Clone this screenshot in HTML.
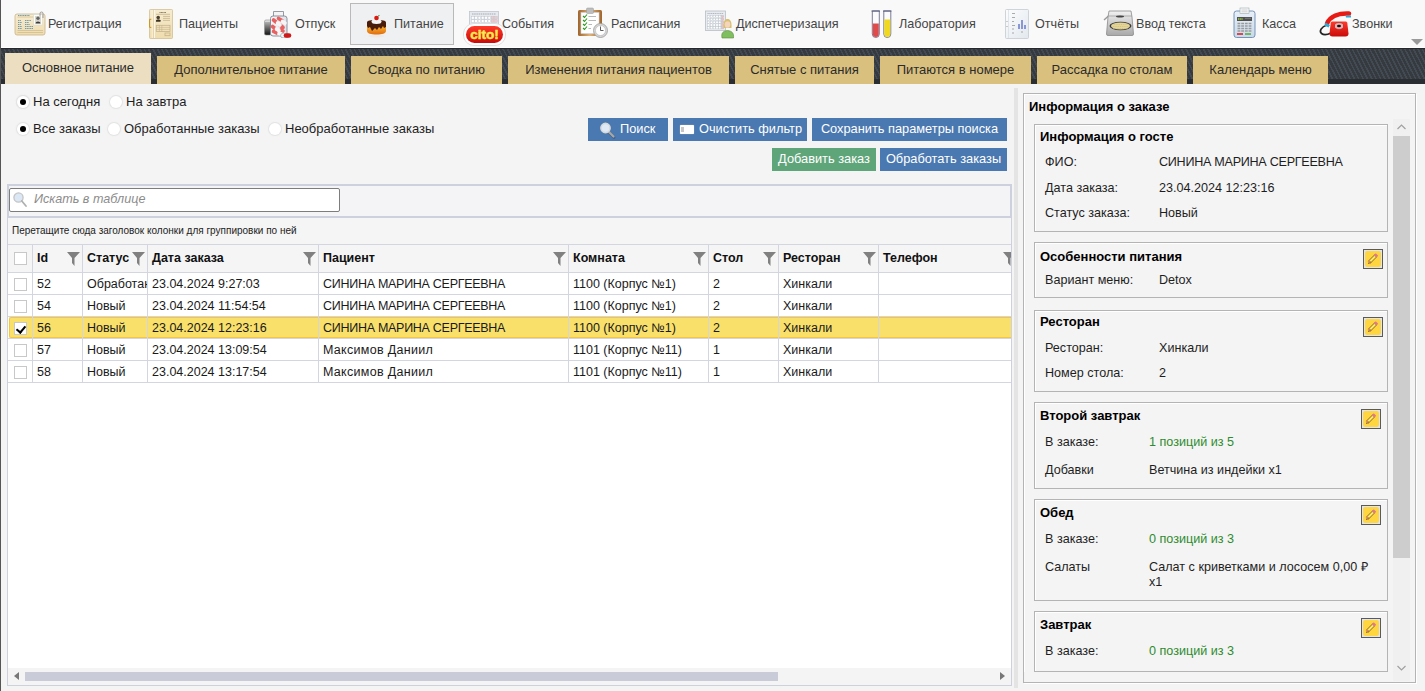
<!DOCTYPE html>
<html><head><meta charset="utf-8">
<style>
*{box-sizing:border-box;margin:0;padding:0}
html,body{width:1425px;height:691px;overflow:hidden}
body{position:relative;background:#f4f4f4;font-family:"Liberation Sans",sans-serif;font-size:13px;color:#222}
.a{position:absolute}
#lb{left:0;top:0;width:1px;height:691px;background:#555}
#tb{left:1px;top:0;width:1424px;height:48px;background:#f9f9f9;border-bottom:1px solid #fff}
.ti{position:absolute;top:0;height:47px;font-size:13px;color:#333;line-height:47px;white-space:nowrap}
.ti .tx{position:absolute;top:0}
#sel{left:350px;top:3px;width:104px;height:42px;background:#eff0f2;border:1px solid #b9b9b9}
#tabbar{left:1px;top:48px;width:1424px;height:36px;background:linear-gradient(#25292d,#25292d) top/100% 1px no-repeat,repeating-linear-gradient(63deg,#343a3f 0 2.3px,#434a51 2.3px 3.9px)}
#tabbar .bot{position:absolute;left:0;top:31px;width:100%;height:5px;background:#2a2e33}
.tt{position:absolute;top:17px;height:15px;line-height:15px;font-size:12.6px;color:#454545;white-space:nowrap}
.tab{position:absolute;top:8px;height:28px;background:#d9c07e;color:#2b2b2b;font-size:13px;text-align:center;line-height:28px;white-space:nowrap}
.tab.act{top:5px;height:31px;background:#ecdfc1;line-height:30px}

.rd{position:absolute;width:12px;height:12px;border-radius:50%;background:#fff;box-shadow:0 0 1px 1px #e2e2e2}
.rd.on::after{content:"";position:absolute;left:3px;top:3px;width:6px;height:6px;border-radius:50%;background:#000}
.lbl{position:absolute;height:15px;line-height:15px;font-size:13px;color:#1e1e1e;white-space:nowrap}
.btn{position:absolute;height:23px;background:#4a78b0;color:#fff;font-size:12.8px;line-height:21px;text-align:center;white-space:nowrap}
.btn.grn{background:#5fa57a}

.cb{position:absolute;width:13px;height:13px;border:1px solid #c8c8c8;background:#fff}
.cb.chk::after{content:"";position:absolute;left:3px;top:1px;width:4px;height:7px;border-right:2px solid #000;border-bottom:2px solid #000;transform:rotate(40deg)}
.hc{position:absolute;top:245px;height:27px;line-height:27px;font-size:12.5px;font-weight:bold;color:#111;white-space:nowrap;overflow:hidden}
.hc span{position:absolute;left:4px;top:0}
.hc .fn{position:absolute;right:2px;top:7px}
.dc{position:absolute;height:21px;line-height:22px;font-size:12.5px;color:#1a1a1a;white-space:nowrap;overflow:hidden;padding-left:4px}


.ptl{position:absolute;height:16px;line-height:16px;font-size:13px;font-weight:bold;color:#000;white-space:nowrap}
.card{position:absolute;left:1034px;width:354px;border:1px solid #b4b4b4;box-shadow:inset 1px 1px 0 #fff}
.ctl{position:absolute;left:1040px;height:16px;line-height:16px;font-size:13px;font-weight:bold;color:#000;white-space:nowrap}
.clb{position:absolute;left:1045px;height:15px;line-height:15px;font-size:12.6px;color:#1e1e1e;white-space:nowrap}
.cvl{position:absolute;height:15px;line-height:15px;font-size:12.6px;color:#1e1e1e;white-space:nowrap}
.cvl.g{color:#2e8b2e}
.eb{position:absolute;width:20px;height:20px;border:1px solid #5a5a5a;background:#e3e5ec}
.eb svg{position:absolute;left:0;top:0}
</style></head>
<body>
<div id="lb" class="a"></div>
<div id="tb" class="a"></div>
<div id="sel" class="a"></div>

<!-- ICONS -->
<svg class="a" style="left:0;top:0" width="1425" height="47" viewBox="0 0 1425 47">
<defs>
<linearGradient id="gBeige" x1="0" y1="0" x2="0" y2="1"><stop offset="0" stop-color="#f7ecd0"/><stop offset="1" stop-color="#efdcae"/></linearGradient>
<linearGradient id="gGlass" x1="0" y1="0" x2="1" y2="0"><stop offset="0" stop-color="#f4f6f8"/><stop offset="1" stop-color="#dfe3e8"/></linearGradient>
<linearGradient id="gCap" x1="0" y1="0" x2="0" y2="1"><stop offset="0" stop-color="#ededed"/><stop offset="1" stop-color="#111"/></linearGradient>
<linearGradient id="gOrange" x1="0" y1="0" x2="0" y2="1"><stop offset="0" stop-color="#ffc933"/><stop offset="1" stop-color="#e06a10"/></linearGradient>
<linearGradient id="gGray" x1="0" y1="0" x2="0" y2="1"><stop offset="0" stop-color="#f2f2f2"/><stop offset="1" stop-color="#a8a8a8"/></linearGradient>
<linearGradient id="gRed" x1="0" y1="0" x2="0" y2="1"><stop offset="0" stop-color="#ff3a2a"/><stop offset="1" stop-color="#c80a0a"/></linearGradient>
<linearGradient id="gBrown" x1="0" y1="0" x2="1" y2="0"><stop offset="0" stop-color="#a0652a"/><stop offset=".5" stop-color="#e0b27a"/><stop offset="1" stop-color="#a0652a"/></linearGradient>
<linearGradient id="gBlue" x1="0" y1="0" x2="0" y2="1"><stop offset="0" stop-color="#e8f0f8"/><stop offset="1" stop-color="#c9d9ea"/></linearGradient>
</defs>
<!-- 1 Registration card -->
<rect x="15" y="14" width="30" height="21" rx="2" fill="url(#gBeige)" stroke="#c9b48a" stroke-width="0.8"/>
<path d="M18 15.5H30M18 20.5H21M25 20.5H31M18 22.5H22M25 22.5H29M18 24.5H21M25 24.5H30M18 26.5H22M25 26.5H33M18 28.5H22M25 28.5H33" stroke="#4a88b0" stroke-width="0.8" stroke-dasharray="1.2 0.5"/>
<path d="M17.5 17H43M17.5 30.5H43M17.5 32.5H43" stroke="#cdb78a" stroke-width="0.7"/>
<rect x="33.5" y="14.5" width="9" height="10.5" fill="#fdfdfb" stroke="#d8d8d0" stroke-width="0.6"/>
<rect x="35" y="16" width="6" height="7.5" fill="#d8d6cc"/><circle cx="38" cy="18.3" r="1.7" fill="#666"/><path d="M35.5 23.5C35.5 20.8 40.5 20.8 40.5 23.5Z" fill="#3a3a3a"/>
<path d="M40 16V13.5A1.5 1.5 0 0 1 43 13.5V18" fill="none" stroke="#888" stroke-width="0.8"/>
<!-- 2 Patients doc -->
<rect x="149.5" y="9.5" width="23" height="29" rx="0.8" fill="url(#gBeige)" stroke="#d2c096" stroke-width="0.8"/>
<path d="M152.3 10V38M154.4 10V38" stroke="#fffaf0" stroke-width="0.9"/>
<path d="M153.3 10V38" stroke="#dcc89a" stroke-width="0.7"/>
<path d="M151.3 19.3H149.6V27.4H151.3" fill="none" stroke="#c8961a" stroke-width="1"/>
<path d="M159.5 12.5H166" stroke="#6a5a40" stroke-width="0.8" stroke-dasharray="1 0.4"/>
<path d="M156 14.3H170" stroke="#c5b38c" stroke-width="0.8"/>
<circle cx="158.2" cy="17.6" r="1.8" fill="#4a4030"/><path d="M156 21.7V20.3C156 19.3 160.5 19.3 160.5 20.3V21.7Z" fill="#3a3020"/>
<path d="M163 16.4H170M163 18.4H170M163 20.4H170" stroke="#c5b38c" stroke-width="0.8"/>
<rect x="156.3" y="25.3" width="13.7" height="6.2" fill="none" stroke="#c5b38c" stroke-width="0.8"/>
<path d="M156.3 27.4H170M156.3 29.4H170M159.4 25.3V31.5M161.8 25.3V31.5" stroke="#c5b38c" stroke-width="0.6"/>
<rect x="165" y="33" width="5" height="2.7" fill="none" stroke="#c5b38c" stroke-width="0.8"/>
<!-- 3 Pills jar -->
<rect x="264.5" y="20" width="6.5" height="15" rx="1.5" fill="url(#gCap)" stroke="#888" stroke-width="0.6"/>
<path d="M265 23H270.5M265 25H270.5M265 27H270.5M265 29H270.5M265 31H270.5M265 33H270.5" stroke="#222" stroke-width="0.6" opacity="0.6"/>
<path d="M273.5 11.5H283.5V16.5H273.5Z" fill="#f4f4f4" stroke="#8a909a" stroke-width="0.9"/>
<rect x="270.5" y="16" width="16.5" height="20" rx="2.5" fill="url(#gGlass)" stroke="#7d8794" stroke-width="0.9"/>
<path d="M273.5 20L276 22M278.5 18.5L282 20.5M272.5 26.5L275 28.5M280 25L283 27.5M273.5 31.5L276.5 33M281 30L283 31" stroke="#e86060" stroke-width="3.6" stroke-linecap="round"/>
<path d="M277.5 23L280 25M282.5 21.5L285 23M276.5 29L279 30.5M279 33.5L281 34" stroke="#f6f6f6" stroke-width="3.6" stroke-linecap="round"/>
<path d="M283 35.5H286" stroke="#9aa" stroke-width="5.2" stroke-linecap="round"/>
<path d="M283 35.5H286" stroke="#f4f4f4" stroke-width="4" stroke-linecap="round"/>
<path d="M286 35.5H289" stroke="#d01818" stroke-width="4.6" stroke-linecap="round"/>
<!-- 4 Cake -->
<ellipse cx="376.5" cy="36" rx="8" ry="1.5" fill="#f0e6da" opacity="0.7"/>
<path d="M367 24V31C367 33.5 371 34.5 376.5 34.5C382 34.5 386 33.5 386 31V24Z" fill="url(#gOrange)"/>
<path d="M367 22.5C367 20.5 371 20 376.5 20C382 20 386 20.5 386 22.5V27L384 28L383 26L381 29L379 27L377 30L375 28L372 31L370 27L368 28L367 26Z" fill="#4a1c0a"/>
<ellipse cx="376.5" cy="21.5" rx="5" ry="2.5" fill="#f4f4f4"/>
<circle cx="376.5" cy="18" r="2.3" fill="#d81a10"/>
<path d="M378 16L379.5 15.5" stroke="#3a9a3a" stroke-width="1"/>
<!-- 5 Events calendar + cito -->
<rect x="469.5" y="11.5" width="29" height="14" fill="#e6e9ee" stroke="#c0c5cc" stroke-width="0.8"/>
<path d="M472 14H496" stroke="#8a929c" stroke-width="0.7" stroke-dasharray="1.5 0.7"/>
<rect x="471.5" y="16.5" width="2.6" height="2.6" fill="#ffffff" stroke="#b8bec8" stroke-width="0.4"/><rect x="474.8" y="16.5" width="2.6" height="2.6" fill="#ffffff" stroke="#b8bec8" stroke-width="0.4"/><rect x="478.1" y="16.5" width="2.6" height="2.6" fill="#ffffff" stroke="#b8bec8" stroke-width="0.4"/><rect x="481.4" y="16.5" width="2.6" height="2.6" fill="#ffffff" stroke="#b8bec8" stroke-width="0.4"/><rect x="484.7" y="16.5" width="2.6" height="2.6" fill="#ffffff" stroke="#b8bec8" stroke-width="0.4"/><rect x="488.0" y="16.5" width="2.6" height="2.6" fill="#ffffff" stroke="#b8bec8" stroke-width="0.4"/><rect x="491.3" y="16.5" width="2.6" height="2.6" fill="#f4c8c8" stroke="#b8bec8" stroke-width="0.4"/><rect x="494.6" y="16.5" width="2.6" height="2.6" fill="#f4c8c8" stroke="#b8bec8" stroke-width="0.4"/><rect x="471.5" y="19.8" width="2.6" height="2.6" fill="#ffffff" stroke="#b8bec8" stroke-width="0.4"/><rect x="474.8" y="19.8" width="2.6" height="2.6" fill="#ffffff" stroke="#b8bec8" stroke-width="0.4"/><rect x="478.1" y="19.8" width="2.6" height="2.6" fill="#ffffff" stroke="#b8bec8" stroke-width="0.4"/><rect x="481.4" y="19.8" width="2.6" height="2.6" fill="#ffffff" stroke="#b8bec8" stroke-width="0.4"/><rect x="484.7" y="19.8" width="2.6" height="2.6" fill="#ffffff" stroke="#b8bec8" stroke-width="0.4"/><rect x="488.0" y="19.8" width="2.6" height="2.6" fill="#ffffff" stroke="#b8bec8" stroke-width="0.4"/><rect x="491.3" y="19.8" width="2.6" height="2.6" fill="#f4c8c8" stroke="#b8bec8" stroke-width="0.4"/><rect x="494.6" y="19.8" width="2.6" height="2.6" fill="#f4c8c8" stroke="#b8bec8" stroke-width="0.4"/>
<rect x="463.5" y="23.5" width="42" height="22" rx="10.5" fill="#fff" stroke="#d8d8d8" stroke-width="0.8"/>
<rect x="466" y="26" width="37" height="17" rx="8.5" fill="url(#gRed)"/>
<text x="484.5" y="39" text-anchor="middle" font-family="Liberation Sans" font-weight="bold" font-size="13.5" fill="#ffea50" stroke="#ffea50" stroke-width="0.5">cito!</text>
<!-- 6 Schedule clipboard + clock -->
<rect x="578" y="10" width="24" height="26" rx="1.5" fill="url(#gBrown)"/>
<rect x="581" y="12.5" width="18" height="21" fill="#fff" stroke="#c8d4e4" stroke-width="0.6"/>
<rect x="586.5" y="8" width="7" height="5.5" rx="1" fill="#bdbdbd" stroke="#999" stroke-width="0.5"/>
<path d="M583 16L584.5 17.5L587 14.5M583 20L584.5 21.5L587 18.5M583 24L584.5 25.5L587 22.5M583 28L584.5 29.5L587 26.5" fill="none" stroke="#2a9a1a" stroke-width="1.1"/>
<path d="M588.5 16.5H596M588.5 20.5H596M588.5 24.5H592M588.5 28.5H591" stroke="#999" stroke-width="0.7"/>
<circle cx="600.5" cy="30.5" r="7" fill="#d6d6d6" stroke="#9a9a9a" stroke-width="0.8"/>
<circle cx="600.5" cy="30.5" r="5" fill="#fff" stroke="#aaa" stroke-width="0.5"/>
<path d="M600.5 26.5V30.5H603.5" stroke="#333" stroke-width="0.8" fill="none"/>
<!-- 7 Dispatch calendar + person -->
<rect x="705.5" y="11" width="20" height="19.5" fill="#e8ebef" stroke="#b8bec6" stroke-width="0.8"/>
<path d="M707.5 13.5H723.5" stroke="#8a929c" stroke-width="0.6" stroke-dasharray="1.2 0.6"/>
<rect x="707.5" y="15.5" width="2.2" height="2.2" fill="#ffffff" stroke="#b0b8c2" stroke-width="0.35"/><rect x="710.3" y="15.5" width="2.2" height="2.2" fill="#ffffff" stroke="#b0b8c2" stroke-width="0.35"/><rect x="713.1" y="15.5" width="2.2" height="2.2" fill="#ffffff" stroke="#b0b8c2" stroke-width="0.35"/><rect x="715.9" y="15.5" width="2.2" height="2.2" fill="#ffffff" stroke="#b0b8c2" stroke-width="0.35"/><rect x="718.7" y="15.5" width="2.2" height="2.2" fill="#ffffff" stroke="#b0b8c2" stroke-width="0.35"/><rect x="721.5" y="15.5" width="2.2" height="2.2" fill="#f0c0c0" stroke="#b0b8c2" stroke-width="0.35"/><rect x="707.5" y="18.3" width="2.2" height="2.2" fill="#ffffff" stroke="#b0b8c2" stroke-width="0.35"/><rect x="710.3" y="18.3" width="2.2" height="2.2" fill="#ffffff" stroke="#b0b8c2" stroke-width="0.35"/><rect x="713.1" y="18.3" width="2.2" height="2.2" fill="#ffffff" stroke="#b0b8c2" stroke-width="0.35"/><rect x="715.9" y="18.3" width="2.2" height="2.2" fill="#ffffff" stroke="#b0b8c2" stroke-width="0.35"/><rect x="718.7" y="18.3" width="2.2" height="2.2" fill="#ffffff" stroke="#b0b8c2" stroke-width="0.35"/><rect x="721.5" y="18.3" width="2.2" height="2.2" fill="#f0c0c0" stroke="#b0b8c2" stroke-width="0.35"/><rect x="707.5" y="21.1" width="2.2" height="2.2" fill="#ffffff" stroke="#b0b8c2" stroke-width="0.35"/><rect x="710.3" y="21.1" width="2.2" height="2.2" fill="#ffffff" stroke="#b0b8c2" stroke-width="0.35"/><rect x="713.1" y="21.1" width="2.2" height="2.2" fill="#ffffff" stroke="#b0b8c2" stroke-width="0.35"/><rect x="715.9" y="21.1" width="2.2" height="2.2" fill="#ffffff" stroke="#b0b8c2" stroke-width="0.35"/><rect x="718.7" y="21.1" width="2.2" height="2.2" fill="#ffffff" stroke="#b0b8c2" stroke-width="0.35"/><rect x="721.5" y="21.1" width="2.2" height="2.2" fill="#f0c0c0" stroke="#b0b8c2" stroke-width="0.35"/><rect x="707.5" y="23.9" width="2.2" height="2.2" fill="#ffffff" stroke="#b0b8c2" stroke-width="0.35"/><rect x="710.3" y="23.9" width="2.2" height="2.2" fill="#ffffff" stroke="#b0b8c2" stroke-width="0.35"/><rect x="713.1" y="23.9" width="2.2" height="2.2" fill="#ffffff" stroke="#b0b8c2" stroke-width="0.35"/><rect x="715.9" y="23.9" width="2.2" height="2.2" fill="#ffffff" stroke="#b0b8c2" stroke-width="0.35"/><rect x="718.7" y="23.9" width="2.2" height="2.2" fill="#ffffff" stroke="#b0b8c2" stroke-width="0.35"/><rect x="721.5" y="23.9" width="2.2" height="2.2" fill="#f0c0c0" stroke="#b0b8c2" stroke-width="0.35"/><rect x="707.5" y="26.7" width="2.2" height="2.2" fill="#ffffff" stroke="#b0b8c2" stroke-width="0.35"/><rect x="710.3" y="26.7" width="2.2" height="2.2" fill="#ffffff" stroke="#b0b8c2" stroke-width="0.35"/><rect x="713.1" y="26.7" width="2.2" height="2.2" fill="#ffffff" stroke="#b0b8c2" stroke-width="0.35"/><rect x="715.9" y="26.7" width="2.2" height="2.2" fill="#ffffff" stroke="#b0b8c2" stroke-width="0.35"/><rect x="718.7" y="26.7" width="2.2" height="2.2" fill="#ffffff" stroke="#b0b8c2" stroke-width="0.35"/><rect x="721.5" y="26.7" width="2.2" height="2.2" fill="#f0c0c0" stroke="#b0b8c2" stroke-width="0.35"/>
<path d="M722 38C721 33 723 31 727.5 30.5C732 31 734 33 733.5 38Z" fill="#7fbf5f" stroke="#5a8a3a" stroke-width="0.6"/>
<path d="M723.5 28C723 21 725 19 727.5 19C730 19 732 21 731.5 28Z" fill="#d8c070"/>
<ellipse cx="727.5" cy="24.5" rx="2.8" ry="3.3" fill="#f4d4bc"/>
<!-- 8 Lab tubes -->
<path d="M872.3 11H879.3V34A3.5 3.5 0 0 1 872.3 34Z" fill="#fbfbfd" stroke="#6a6e8a" stroke-width="0.9"/>
<path d="M872.8 23.5H878.8V34A3 3 0 0 1 872.8 34Z" fill="#e04a4a"/>
<path d="M883.8 11H890.8V34A3.5 3.5 0 0 1 883.8 34Z" fill="#fbfbfd" stroke="#6a6e8a" stroke-width="0.9"/>
<path d="M884.3 19.5H890.3V34A3 3 0 0 1 884.3 34Z" fill="#f0d820"/>
<path d="M871.5 11H880M883 11H891.5" stroke="#55597a" stroke-width="1.2"/>
<!-- 9 Reports doc -->
<linearGradient id="gRep" x1="0" y1="0" x2="1" y2="1"><stop offset="0" stop-color="#fdfdfe"/><stop offset="1" stop-color="#e2e8ee"/></linearGradient>
<rect x="1005.5" y="9.5" width="23" height="29" rx="1" fill="url(#gRep)" stroke="#c4cad2" stroke-width="0.8"/>
<path d="M1008.5 10V38" stroke="#d0d8e0" stroke-width="0.6"/>
<path d="M1012 13.5H1015M1012 17.5H1015M1012 21.5H1014M1012 25.5H1015M1012 29H1014M1012 33H1014M1021 32H1023" stroke="#777" stroke-width="0.6"/>
<path d="M1007 21V22M1007 26V27" stroke="#888" stroke-width="0.8"/>
<path d="M1019 24V29M1022 20V29M1025 25V29" stroke="#7080cc" stroke-width="1.6"/>
<!-- 10 Typewriter -->
<path d="M1104 20L1109 15.5" stroke="#9a9a9a" stroke-width="1.4"/>
<path d="M1109 11H1131L1132 17L1133.5 34A1.5 1.5 0 0 1 1132 35.5H1108A1.5 1.5 0 0 1 1106.5 34L1108 17Z" fill="url(#gGray)" stroke="#8a8a8a" stroke-width="0.8"/>
<path d="M1108 16H1132" stroke="#a0a0a0" stroke-width="0.8"/>
<ellipse cx="1120" cy="16.5" rx="4" ry="1" fill="#444"/>
<ellipse cx="1120.5" cy="26" rx="11" ry="4.2" fill="#3a3a3a"/>
<ellipse cx="1120.5" cy="26" rx="9.5" ry="3.4" fill="#e4d698"/>
<path d="M1112 24.5H1129M1111 26.5H1130M1113 28.5H1128" stroke="#c8b870" stroke-width="0.6" stroke-dasharray="1 0.8"/>
<!-- 11 Kassa -->
<rect x="1234" y="11" width="21" height="26.5" rx="2.5" fill="url(#gBlue)" stroke="#6a8ab0" stroke-width="0.9"/>
<rect x="1240" y="8" width="9" height="5.5" fill="#f8f8f8" stroke="#9aa" stroke-width="0.6"/>
<path d="M1241.5 10H1247.5M1241.5 11.8H1247.5" stroke="#aaa" stroke-width="0.5"/>
<rect x="1237" y="17" width="15" height="4" fill="#505050"/>
<path d="M1238 19H1243" stroke="#9ad040" stroke-width="1.6" stroke-dasharray="1.2 0.5"/>
<path d="M1245 18.3H1251" stroke="#999" stroke-width="0.6"/>
<path d="M1237.5 23.5H1251.5M1237.5 26H1251.5M1237.5 28.5H1251.5M1237.5 31H1251.5" stroke="#9a9a9a" stroke-width="1.3" stroke-dasharray="2.8 0.9"/>
<path d="M1237 34H1243" stroke="#d81818" stroke-width="1.5"/><path d="M1245 34H1251" stroke="#58a830" stroke-width="1.5"/>
<!-- 12 Phone -->
<path d="M1327 25C1321 27 1319 31 1321.5 33.5C1324 35.5 1328 34.5 1331 33" fill="none" stroke="#222" stroke-width="1.7"/>
<path d="M1327 23.5C1330 16 1339 13 1349 13.5" fill="none" stroke="#e81a14" stroke-width="4.6" stroke-linecap="round"/>
<path d="M1325.5 22.5L1330 25L1328.5 27.5L1324.5 25.5Z" fill="#2aa8d8"/>
<path d="M1345.5 15.5H1351V17.5H1346Z" fill="#2aa8d8"/>
<path d="M1332.5 21.5H1345.5C1346.5 21.5 1347 22 1347.3 23L1348.5 33.5C1348.5 35.5 1347.5 36.5 1345.5 36.5H1332.5C1330.5 36.5 1329.5 35.5 1329.5 33.5L1330.7 23C1331 22 1331.5 21.5 1332.5 21.5Z" fill="url(#gRed)"/>
<ellipse cx="1339" cy="26" rx="4.6" ry="3.4" fill="#e8b0b0" stroke="#b01010" stroke-width="0.6"/>
<ellipse cx="1339" cy="26" rx="2" ry="1.2" fill="#111"/>
</svg>

<!-- /ICONS -->
<!-- toolbar texts -->
<div class="tt" style="left:48px">Регистрация</div>
<div class="tt" style="left:179px">Пациенты</div>
<div class="tt" style="left:295px">Отпуск</div>
<div class="tt" style="left:394px">Питание</div>
<div class="tt" style="left:502px">События</div>
<div class="tt" style="left:611px">Расписания</div>
<div class="tt" style="left:736px">Диспетчеризация</div>
<div class="tt" style="left:899px">Лаборатория</div>
<div class="tt" style="left:1035px">Отчёты</div>
<div class="tt" style="left:1136px">Ввод текста</div>
<div class="tt" style="left:1262px">Касса</div>
<div class="tt" style="left:1352px">Звонки</div>
<div class="a" style="left:1411px;top:39px;width:0;height:0;border-left:6px solid transparent;border-right:6px solid transparent;border-top:6px solid #9a9a9a"></div>
<div id="tabbar" class="a"><div class="bot"></div>
<div class="tab act" style="left:4px;width:146px">Основное питание</div>
<div class="tab" style="left:156px;width:188px">Дополнительное питание</div>
<div class="tab" style="left:350px;width:151px">Сводка по питанию</div>
<div class="tab" style="left:507px;width:221px">Изменения питания пациентов</div>
<div class="tab" style="left:734px;width:139px">Снятые с питания</div>
<div class="tab" style="left:879px;width:151px">Питаются в номере</div>
<div class="tab" style="left:1036px;width:150px">Рассадка по столам</div>
<div class="tab" style="left:1192px;width:135px">Календарь меню</div>
</div>

<!-- radios -->
<div class="rd" style="left:17px;top:96px"></div><div class="rd on" style="left:17px;top:96px"></div>
<div class="lbl" style="left:33px;top:94px">На сегодня</div>
<div class="rd" style="left:110px;top:96px"></div>
<div class="lbl" style="left:126px;top:94px">На завтра</div>
<div class="rd on" style="left:17px;top:123px"></div>
<div class="lbl" style="left:33px;top:121px">Все заказы</div>
<div class="rd" style="left:108px;top:123px"></div>
<div class="lbl" style="left:124px;top:121px">Обработанные заказы</div>
<div class="rd" style="left:269px;top:123px"></div>
<div class="lbl" style="left:285px;top:121px">Необработанные заказы</div>
<!-- buttons -->
<div class="btn" style="left:588px;top:118px;width:80px;text-align:left;padding-left:32px">Поиск</div><svg class="a" style="left:598px;top:120px" width="20" height="20" viewBox="0 0 20 20"><path d="M11 12.5L16 17.5" stroke="#3a4a60" stroke-width="2.6" stroke-linecap="round" opacity="0.5"/><path d="M10.5 11.5L15.5 16.5" stroke="#a8a8a8" stroke-width="2.2" stroke-linecap="round"/><circle cx="7.5" cy="8" r="4.6" fill="#dfeaf8" stroke="#d8d8d8" stroke-width="1.6"/></svg>
<div class="btn" style="left:673px;top:118px;width:134px;text-align:left;padding-left:26px">Очистить фильтр</div><div class="a" style="left:680px;top:125px;width:14px;height:9px;background:#fff;border-radius:1px;box-shadow:0 0 1px #ddd"></div><div class="a" style="left:681px;top:127px;width:3px;height:5px;background:#c8c8c8"></div>
<div class="btn" style="left:812px;top:118px;width:195px">Сохранить параметры поиска</div>
<div class="btn grn" style="left:772px;top:148px;width:104px">Добавить заказ</div>
<div class="btn" style="left:880px;top:148px;width:127px">Обработать заказы</div>
<!-- grid -->
<div class="a" style="left:7px;top:184px;width:1005px;height:34px;border:2px solid #cdd0dd;background:#f4f4f6"></div>
<div class="a" style="left:9px;top:188px;width:331px;height:24px;border:1px solid #7d7d7d;border-radius:2px;background:#fff"></div>
<svg class="a" style="left:12px;top:190px" width="18" height="20" viewBox="0 0 18 20"><circle cx="6.5" cy="7.5" r="4.6" fill="#dbe7f5" stroke="#c4c4c4" stroke-width="1.3"/><path d="M9.8 11L14 16" stroke="#b0b0b0" stroke-width="1.8" stroke-linecap="round"/></svg>
<div class="a" style="left:34px;top:192px;height:15px;line-height:15px;font-size:12.6px;font-style:italic;color:#8c8c8c">Искать в таблице</div>
<div class="a" style="left:7px;top:218px;width:1005px;height:468px;border:1px solid #cdd0dd;border-top:0;background:#fff"></div>
<div class="a" style="left:8px;top:218px;width:1003px;height:27px;background:#f5f5f5;border-bottom:1px solid #d3d5e1"></div>
<div class="a" style="left:12px;top:224px;height:13px;line-height:13px;font-size:10px;color:#222">Перетащите сюда заголовок колонки для группировки по ней</div>
<div class="a" style="left:8px;top:245px;width:1003px;height:28px;background:#f5f5f5;border-bottom:1px solid #d3d5e1"></div>
<div class="a" style="left:8px;top:294px;width:1003px;height:1px;background:#d3d5e1"></div>
<div class="a" style="left:8px;top:316px;width:1003px;height:1px;background:#d3d5e1"></div>
<div class="a" style="left:8px;top:338px;width:1003px;height:1px;background:#d3d5e1"></div>
<div class="a" style="left:8px;top:360px;width:1003px;height:1px;background:#d3d5e1"></div>
<div class="a" style="left:8px;top:382px;width:1003px;height:1px;background:#d3d5e1"></div>
<div class="a" style="left:9px;top:317px;width:1002px;height:21px;background:#f9e06b;border-top:1px solid #f8c53a;border-bottom:1px solid #f8c53a;border-left:1px solid #f8c53a;border-radius:2px 0 0 2px"></div>
<div class="a" style="left:32px;top:244px;width:1px;height:138px;background:#d3d5e1"></div>
<div class="a" style="left:82px;top:244px;width:1px;height:138px;background:#d3d5e1"></div>
<div class="a" style="left:147px;top:244px;width:1px;height:138px;background:#d3d5e1"></div>
<div class="a" style="left:318px;top:244px;width:1px;height:138px;background:#d3d5e1"></div>
<div class="a" style="left:568px;top:244px;width:1px;height:138px;background:#d3d5e1"></div>
<div class="a" style="left:708px;top:244px;width:1px;height:138px;background:#d3d5e1"></div>
<div class="a" style="left:778px;top:244px;width:1px;height:138px;background:#d3d5e1"></div>
<div class="a" style="left:878px;top:244px;width:1px;height:138px;background:#d3d5e1"></div>
<div class="cb" style="left:14px;top:252px"></div>
<div class="hc" style="left:33px;width:49px"><span>Id</span><svg class="fn" width="13" height="14" viewBox="0 0 13 14"><path d="M0 0H13L7.5 6V14L5 11V6Z" fill="#808080"/></svg></div>
<div class="hc" style="left:83px;width:64px"><span>Статус</span><svg class="fn" width="13" height="14" viewBox="0 0 13 14"><path d="M0 0H13L7.5 6V14L5 11V6Z" fill="#808080"/></svg></div>
<div class="hc" style="left:148px;width:170px"><span>Дата заказа</span><svg class="fn" width="13" height="14" viewBox="0 0 13 14"><path d="M0 0H13L7.5 6V14L5 11V6Z" fill="#808080"/></svg></div>
<div class="hc" style="left:319px;width:249px"><span>Пациент</span><svg class="fn" width="13" height="14" viewBox="0 0 13 14"><path d="M0 0H13L7.5 6V14L5 11V6Z" fill="#808080"/></svg></div>
<div class="hc" style="left:569px;width:139px"><span>Комната</span><svg class="fn" width="13" height="14" viewBox="0 0 13 14"><path d="M0 0H13L7.5 6V14L5 11V6Z" fill="#808080"/></svg></div>
<div class="hc" style="left:709px;width:69px"><span>Стол</span><svg class="fn" width="13" height="14" viewBox="0 0 13 14"><path d="M0 0H13L7.5 6V14L5 11V6Z" fill="#808080"/></svg></div>
<div class="hc" style="left:779px;width:99px"><span>Ресторан</span><svg class="fn" width="13" height="14" viewBox="0 0 13 14"><path d="M0 0H13L7.5 6V14L5 11V6Z" fill="#808080"/></svg></div>
<div class="hc" style="left:879px;width:139px"><span>Телефон</span><svg class="fn" width="13" height="14" viewBox="0 0 13 14"><path d="M0 0H13L7.5 6V14L5 11V6Z" fill="#808080"/></svg></div>
<div class="cb" style="left:14px;top:278px"></div>
<div class="dc" style="left:33px;top:273px;width:49px">52</div>
<div class="dc" style="left:83px;top:273px;width:64px">Обработан</div>
<div class="dc" style="left:148px;top:273px;width:170px">23.04.2024 9:27:03</div>
<div class="dc" style="left:319px;top:273px;width:249px"><span style="letter-spacing:-0.28px">СИНИНА МАРИНА СЕРГЕЕВНА</span></div>
<div class="dc" style="left:569px;top:273px;width:139px">1100 (Корпус №1)</div>
<div class="dc" style="left:709px;top:273px;width:69px">2</div>
<div class="dc" style="left:779px;top:273px;width:99px">Хинкали</div>
<div class="dc" style="left:879px;top:273px;width:139px"></div>
<div class="cb" style="left:14px;top:300px"></div>
<div class="dc" style="left:33px;top:295px;width:49px">54</div>
<div class="dc" style="left:83px;top:295px;width:64px">Новый</div>
<div class="dc" style="left:148px;top:295px;width:170px">23.04.2024 11:54:54</div>
<div class="dc" style="left:319px;top:295px;width:249px"><span style="letter-spacing:-0.28px">СИНИНА МАРИНА СЕРГЕЕВНА</span></div>
<div class="dc" style="left:569px;top:295px;width:139px">1100 (Корпус №1)</div>
<div class="dc" style="left:709px;top:295px;width:69px">2</div>
<div class="dc" style="left:779px;top:295px;width:99px">Хинкали</div>
<div class="dc" style="left:879px;top:295px;width:139px"></div>
<div class="cb chk" style="left:14px;top:322px"></div>
<div class="dc" style="left:33px;top:317px;width:49px">56</div>
<div class="dc" style="left:83px;top:317px;width:64px">Новый</div>
<div class="dc" style="left:148px;top:317px;width:170px">23.04.2024 12:23:16</div>
<div class="dc" style="left:319px;top:317px;width:249px"><span style="letter-spacing:-0.28px">СИНИНА МАРИНА СЕРГЕЕВНА</span></div>
<div class="dc" style="left:569px;top:317px;width:139px">1100 (Корпус №1)</div>
<div class="dc" style="left:709px;top:317px;width:69px">2</div>
<div class="dc" style="left:779px;top:317px;width:99px">Хинкали</div>
<div class="dc" style="left:879px;top:317px;width:139px"></div>
<div class="cb" style="left:14px;top:344px"></div>
<div class="dc" style="left:33px;top:339px;width:49px">57</div>
<div class="dc" style="left:83px;top:339px;width:64px">Новый</div>
<div class="dc" style="left:148px;top:339px;width:170px">23.04.2024 13:09:54</div>
<div class="dc" style="left:319px;top:339px;width:249px"><span style="letter-spacing:0.3px">Максимов Даниил</span></div>
<div class="dc" style="left:569px;top:339px;width:139px">1101 (Корпус №11)</div>
<div class="dc" style="left:709px;top:339px;width:69px">1</div>
<div class="dc" style="left:779px;top:339px;width:99px">Хинкали</div>
<div class="dc" style="left:879px;top:339px;width:139px"></div>
<div class="cb" style="left:14px;top:366px"></div>
<div class="dc" style="left:33px;top:361px;width:49px">58</div>
<div class="dc" style="left:83px;top:361px;width:64px">Новый</div>
<div class="dc" style="left:148px;top:361px;width:170px">23.04.2024 13:17:54</div>
<div class="dc" style="left:319px;top:361px;width:249px"><span style="letter-spacing:0.3px">Максимов Даниил</span></div>
<div class="dc" style="left:569px;top:361px;width:139px">1101 (Корпус №11)</div>
<div class="dc" style="left:709px;top:361px;width:69px">1</div>
<div class="dc" style="left:779px;top:361px;width:99px">Хинкали</div>
<div class="dc" style="left:879px;top:361px;width:139px"></div>
<div class="a" style="left:8px;top:668px;width:1003px;height:17px;background:#f4f4f4"></div>
<div class="a" style="left:25px;top:672px;width:753px;height:9px;background:#c9cbd9"></div>
<div class="a" style="left:14px;top:672px;width:0;height:0;border-top:4.5px solid transparent;border-bottom:4.5px solid transparent;border-right:5px solid #777"></div>
<div class="a" style="left:1000px;top:672px;width:0;height:0;border-top:4.5px solid transparent;border-bottom:4.5px solid transparent;border-left:5px solid #777"></div>
<div class="a" style="left:1011px;top:184px;width:3px;height:502px;background:#f4f4f4"></div>
<div class="a" style="left:1011px;top:184px;width:1px;height:502px;background:#cdd0dd"></div>
<div class="a" style="left:1014px;top:88px;width:4px;height:600px;background:#e4e4e4"></div>
<div class="a" style="left:1023px;top:93px;width:393px;height:590px;border:1px solid #b4b4b4;box-shadow:inset 1px 1px 0 #fff,1px 1px 0 #fff"></div>
<div class="ptl" style="left:1029px;top:99px">Информация о заказе</div>
<div class="a" style="left:1393px;top:119px;width:17px;height:562px;background:#f0f0f0"></div>
<div class="a" style="left:1393px;top:136px;width:17px;height:422px;background:#cdcdcd"></div>
<svg class="a" style="left:1396px;top:122px" width="11" height="10" viewBox="0 0 11 10"><path d="M1.5 7L5.5 3L9.5 7" fill="none" stroke="#a0a0a0" stroke-width="1.2"/></svg>
<svg class="a" style="left:1396px;top:663px" width="11" height="10" viewBox="0 0 11 10"><path d="M1.5 3L5.5 7L9.5 3" fill="none" stroke="#a0a0a0" stroke-width="1.2"/></svg>
<div class="card" style="top:124px;height:108px"></div>
<div class="ctl" style="top:129px">Информация о госте</div>
<div class="clb" style="top:155px">ФИО:</div>
<div class="cvl" style="left:1159px;top:155px"><span style="letter-spacing:-0.28px">СИНИНА МАРИНА СЕРГЕЕВНА</span></div>
<div class="clb" style="top:181px">Дата заказа:</div>
<div class="cvl" style="left:1159px;top:181px">23.04.2024 12:23:16</div>
<div class="clb" style="top:206px">Статус заказа:</div>
<div class="cvl" style="left:1159px;top:206px">Новый</div>
<div class="card" style="top:242px;height:56px"></div>
<div class="ctl" style="top:249px">Особенности питания</div>
<div class="clb" style="top:273px">Вариант меню:</div>
<div class="cvl" style="left:1159px;top:273px">Detox</div>
<div class="eb" style="left:1363px;top:249px"><svg width="18" height="18" viewBox="0 0 18 18"><rect x="1" y="1" width="16" height="16" rx="2" fill="#ffd540"/><path d="M5 12.5L12 5.5" stroke="#8a6a1a" stroke-width="3.6" stroke-linecap="butt"/><path d="M5 12.5L12 5.5" stroke="#ffe96a" stroke-width="2.2"/><path d="M11 6.5L13 4.5" stroke="#e07a8a" stroke-width="3.4"/><path d="M4 14L5.6 10.8L7.2 12.4Z" fill="#333"/><path d="M5 12.5L6.2 11.3" stroke="#f08060" stroke-width="2.4"/></svg></div>
<div class="card" style="top:310px;height:82px"></div>
<div class="ctl" style="top:314px">Ресторан</div>
<div class="clb" style="top:341px">Ресторан:</div>
<div class="cvl" style="left:1159px;top:341px">Хинкали</div>
<div class="clb" style="top:366px">Номер стола:</div>
<div class="cvl" style="left:1159px;top:366px">2</div>
<div class="eb" style="left:1363px;top:317px"><svg width="18" height="18" viewBox="0 0 18 18"><rect x="1" y="1" width="16" height="16" rx="2" fill="#ffd540"/><path d="M5 12.5L12 5.5" stroke="#8a6a1a" stroke-width="3.6" stroke-linecap="butt"/><path d="M5 12.5L12 5.5" stroke="#ffe96a" stroke-width="2.2"/><path d="M11 6.5L13 4.5" stroke="#e07a8a" stroke-width="3.4"/><path d="M4 14L5.6 10.8L7.2 12.4Z" fill="#333"/><path d="M5 12.5L6.2 11.3" stroke="#f08060" stroke-width="2.4"/></svg></div>
<div class="card" style="top:402px;height:87px"></div>
<div class="ctl" style="top:408px">Второй завтрак</div>
<div class="clb" style="top:435px">В заказе:</div>
<div class="cvl g" style="left:1149px;top:435px">1 позиций из 5</div>
<div class="clb" style="top:463px">Добавки</div>
<div class="cvl" style="left:1149px;top:463px">Ветчина из индейки x1</div>
<div class="eb" style="left:1361px;top:409px"><svg width="18" height="18" viewBox="0 0 18 18"><rect x="1" y="1" width="16" height="16" rx="2" fill="#ffd540"/><path d="M5 12.5L12 5.5" stroke="#8a6a1a" stroke-width="3.6" stroke-linecap="butt"/><path d="M5 12.5L12 5.5" stroke="#ffe96a" stroke-width="2.2"/><path d="M11 6.5L13 4.5" stroke="#e07a8a" stroke-width="3.4"/><path d="M4 14L5.6 10.8L7.2 12.4Z" fill="#333"/><path d="M5 12.5L6.2 11.3" stroke="#f08060" stroke-width="2.4"/></svg></div>
<div class="card" style="top:499px;height:102px"></div>
<div class="ctl" style="top:505px">Обед</div>
<div class="clb" style="top:532px">В заказе:</div>
<div class="cvl g" style="left:1149px;top:532px">0 позиций из 3</div>
<div class="clb" style="top:560px">Салаты</div>
<div class="cvl" style="left:1149px;top:560px">Салат с криветками и лососем 0,00 ₽<br>x1</div>
<div class="eb" style="left:1361px;top:505px"><svg width="18" height="18" viewBox="0 0 18 18"><rect x="1" y="1" width="16" height="16" rx="2" fill="#ffd540"/><path d="M5 12.5L12 5.5" stroke="#8a6a1a" stroke-width="3.6" stroke-linecap="butt"/><path d="M5 12.5L12 5.5" stroke="#ffe96a" stroke-width="2.2"/><path d="M11 6.5L13 4.5" stroke="#e07a8a" stroke-width="3.4"/><path d="M4 14L5.6 10.8L7.2 12.4Z" fill="#333"/><path d="M5 12.5L6.2 11.3" stroke="#f08060" stroke-width="2.4"/></svg></div>
<div class="card" style="top:611px;height:61px"></div>
<div class="ctl" style="top:617px">Завтрак</div>
<div class="clb" style="top:644px">В заказе:</div>
<div class="cvl g" style="left:1149px;top:644px">0 позиций из 3</div>
<div class="eb" style="left:1361px;top:618px"><svg width="18" height="18" viewBox="0 0 18 18"><rect x="1" y="1" width="16" height="16" rx="2" fill="#ffd540"/><path d="M5 12.5L12 5.5" stroke="#8a6a1a" stroke-width="3.6" stroke-linecap="butt"/><path d="M5 12.5L12 5.5" stroke="#ffe96a" stroke-width="2.2"/><path d="M11 6.5L13 4.5" stroke="#e07a8a" stroke-width="3.4"/><path d="M4 14L5.6 10.8L7.2 12.4Z" fill="#333"/><path d="M5 12.5L6.2 11.3" stroke="#f08060" stroke-width="2.4"/></svg></div>
<div class="a" style="left:1024px;top:672px;width:369px;height:10px;background:#f4f4f4"></div>
</body></html>
